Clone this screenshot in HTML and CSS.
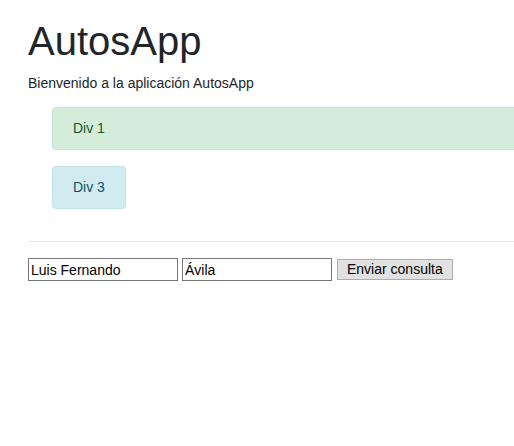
FILE: index.html
```html
<!DOCTYPE html>
<html lang="es">
<head>
<meta charset="utf-8">
<title>AutosApp</title>
<link rel="stylesheet" href="styles.css">
</head>
<body>
<div class="container">
  <h1 class="title">AutosApp</h1>
  <p class="lead">Bienvenido a la aplicación AutosApp</p>
  <div class="alerts">
    <div class="alert alert-success">Div 1</div>
    <div class="alert alert-info">Div 3</div>
  </div>
  <hr class="divider">
  <form class="form">
    <input class="field" type="text" name="nombre" value="Luis Fernando">
    <input class="field" type="text" name="apellido" value="Ávila">
    <button class="submit" type="submit">Enviar consulta</button>
  </form>
</div>
</body>
</html>
```

FILE: styles.css
```css
html, body {
  margin: 0;
  padding: 0;
  background: #fff;
  overflow: hidden;
}
body {
  font-family: "Liberation Sans", Arial, sans-serif;
  font-size: 14px;
  color: #212529;
}
.container {
  width: calc(100% + 40px);
  box-sizing: border-box;
  padding: 17px 0 0 28px;
}
.title {
  margin: 0 0 8px 0;
  font-size: 40px;
  line-height: 48px;
  font-weight: 500;
}
.lead {
  margin: 0 0 13px 0;
  line-height: 21px;
}
.alerts {
  display: flex;
  flex-direction: column;
  align-items: flex-start;
  gap: 16px;
  padding-left: 24px;
}
.alert {
  box-sizing: border-box;
  padding: 10px 20px;
  line-height: 21px;
  border: 1px solid transparent;
  border-radius: 4px;
}
.alert-success {
  align-self: stretch;
  background: #d4edda;
  border-color: #c3e6cb;
  color: #155724;
}
.alert-info {
  background: #d1ecf1;
  border-color: #bee5eb;
  color: #0c5460;
}
.divider {
  margin: 32px 0 16px 0;
  border: 0;
  border-top: 1px solid #e6e6e6;
  height: 0;
}
.form {
  display: flex;
  align-items: center;
  gap: 4px;
}
.field {
  box-sizing: border-box;
  width: 150px;
  height: 23px;
  margin: 0;
  padding: 1px 2px;
  border: 1px solid #767676;
  border-radius: 0;
  font-family: "Liberation Sans", Arial, sans-serif;
  font-size: 14px;
  color: #000;
  background: #fff;
}
.submit {
  box-sizing: border-box;
  margin: 0 0 0 1px;
  height: 21px;
  padding: 0 9px;
  border: 1px solid #adadad;
  border-radius: 0;
  background: #e1e1e1;
  font-family: "Liberation Sans", Arial, sans-serif;
  font-size: 14px;
  color: #000;
  line-height: 19px;
}
```
